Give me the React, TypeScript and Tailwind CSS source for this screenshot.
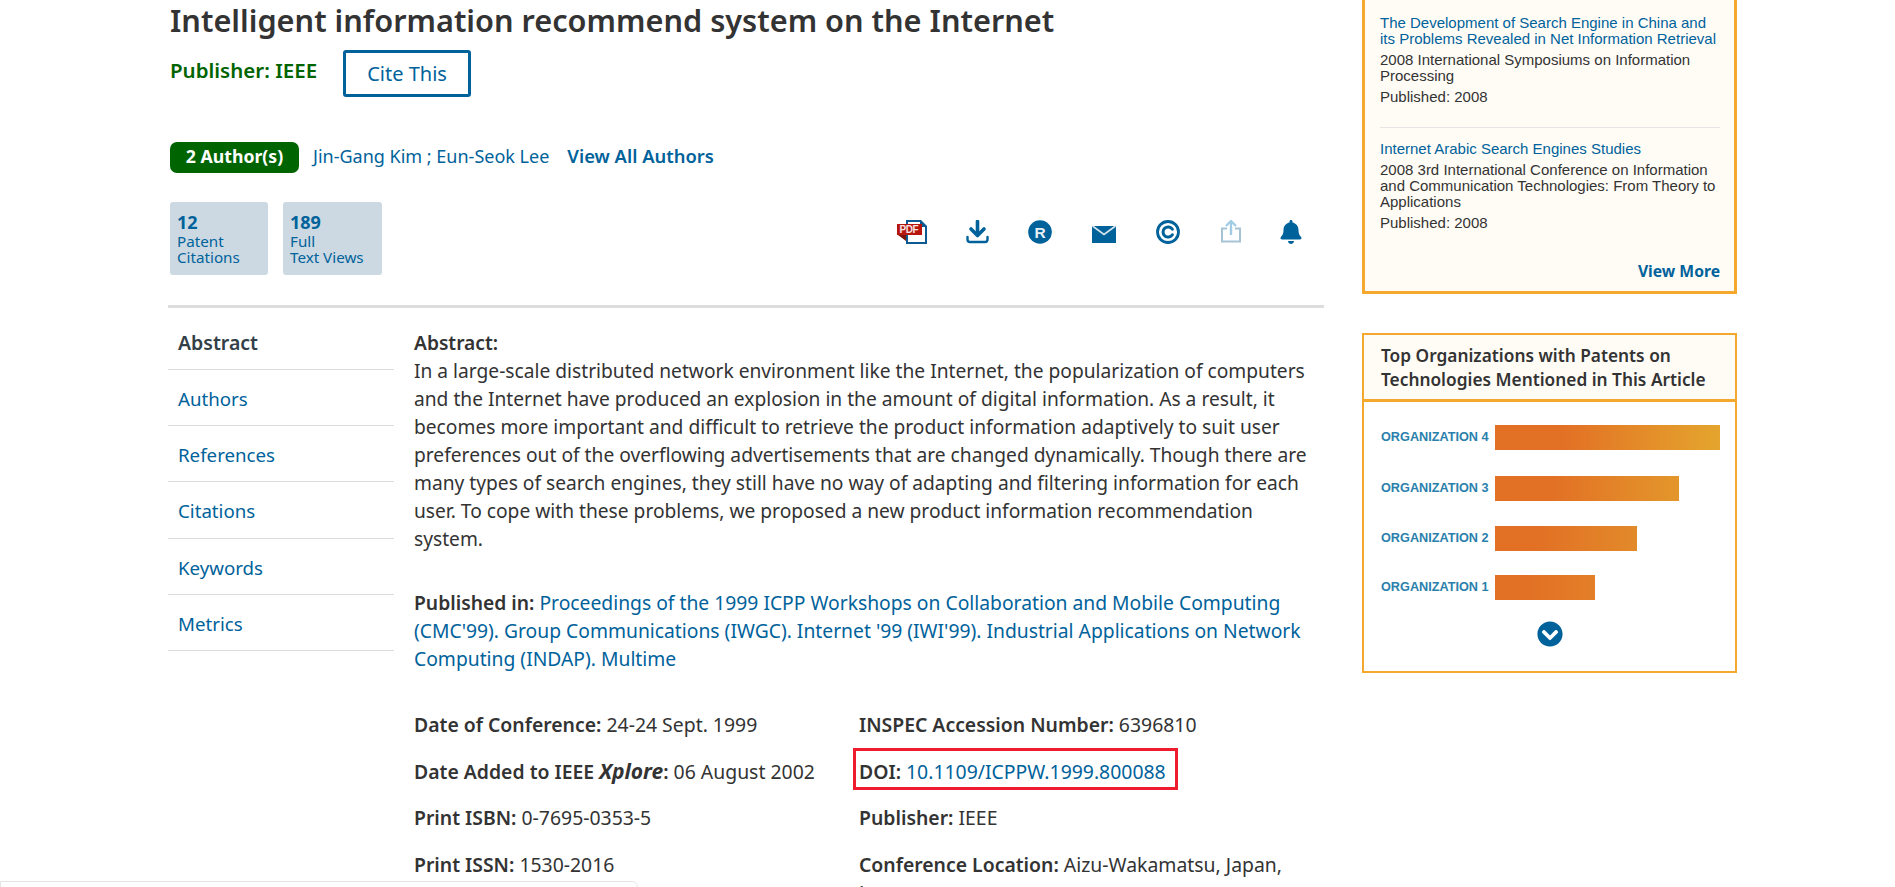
import { FaBell, FaChevronCircleDown } from "react-icons/fa";

const sans = "font-['Noto_Sans',sans-serif]";

const navItems = ["Authors", "References", "Citations", "Keywords", "Metrics"];

const abstractLines = [
  "In a large-scale distributed network environment like the Internet, the popularization of computers",
  "and the Internet have produced an explosion in the amount of digital information. As a result, it",
  "becomes more important and difficult to retrieve the product information adaptively to suit user",
  "preferences out of the overflowing advertisements that are changed dynamically. Though there are",
  "many types of search engines, they still have no way of adapting and filtering information for each",
  "user. To cope with these problems, we proposed a new product information recommendation",
  "system.",
];

const orgBars = [
  { label: "ORGANIZATION 4", width: "w-[225px]", tone: "to-[#e4a52d]", gap: "mb-[26px]" },
  { label: "ORGANIZATION 3", width: "w-[184px]", tone: "to-[#e3962b]", gap: "mb-[25px]" },
  { label: "ORGANIZATION 2", width: "w-[142px]", tone: "to-[#e28a2a]", gap: "mb-[24px]" },
  { label: "ORGANIZATION 1", width: "w-[100px]", tone: "to-[#e37f28]", gap: "mb-[21px]" },
];

const PdfIcon = () => (
  <svg width="31" height="24" viewBox="0 0 31 24">
    <path d="M9 0h15l6 6v18H9z" fill="#0d5a92" />
    <path d="M11 2h12v5h5v15H11z" fill="#fff" />
    <path d="M0 4h25v11H0z" fill="#b8150f" />
    <path d="M1 15h8v6z" fill="#7d110c" />
    <text x="2.5" y="13.2" fontSize="10" fontWeight="700" fill="#f4e4e2" fontFamily="Liberation Sans, sans-serif" textLength="19">
      PDF
    </text>
  </svg>
);

const DownloadIcon = () => (
  <svg width="23" height="24" viewBox="0 0 23 24" fill="none">
    <path d="M11.5 1.5v13" stroke="#00629b" strokeWidth="3.6" strokeLinecap="round" />
    <path d="M5 9l6.5 6.5L18 9" stroke="#00629b" strokeWidth="3.6" strokeLinecap="round" strokeLinejoin="round" />
    <path d="M1.5 17v2.5c0 1.6 1 2.5 2.5 2.5h15c1.5 0 2.5-.9 2.5-2.5V17" stroke="#00629b" strokeWidth="2.4" strokeLinecap="round" />
  </svg>
);

const RegisteredIcon = () => (
  <svg width="24" height="24" viewBox="0 0 24 24">
    <circle cx="12" cy="12" r="11.8" fill="#00629b" />
    <text x="12" y="17.5" textAnchor="middle" fontSize="15.5" fontWeight="700" fill="#e8f1f6" fontFamily="Liberation Sans, sans-serif">
      R
    </text>
  </svg>
);

const MailIcon = () => (
  <svg width="24" height="24" viewBox="0 0 24 24">
    <path d="M0 6h24V23H0z" fill="#00629b" />
    <path d="M0.5 6L12 14.5 23.5 6" fill="none" stroke="#d6e6ef" strokeWidth="1.6" />
  </svg>
);

const CopyrightIcon = () => (
  <svg width="24" height="24" viewBox="0 0 24 24" fill="none">
    <circle cx="12" cy="12" r="10.5" stroke="#00629b" strokeWidth="2.8" />
    <path d="M16.4 9.2a5.1 5.1 0 1 0 0 5.6" stroke="#00629b" strokeWidth="3" strokeLinecap="round" />
  </svg>
);

const ShareIcon = () => (
  <svg width="20" height="24" viewBox="0 0 20 24" fill="none">
    <path d="M6 8.5H1V21.5H19V8.5H14" stroke="#a6c3d6" strokeWidth="2" />
    <path d="M10 15V2" stroke="#9fcbe6" strokeWidth="2.4" />
    <path d="M5 6l5-5 5 5" stroke="#9fcbe6" strokeWidth="2.2" />
  </svg>
);

const MetricCard = ({ value, top, bottom, width }: { value: string; top: string; bottom: string; width: string }) => (
  <div className={`${width} h-[73px] rounded-[3px] bg-[#ccd9e2] pl-[7px] pt-[10px] text-[#00629b]`}>
    <div className="text-[18px] font-bold leading-[21px]">{value}</div>
    <div className="text-[15.2px] leading-[16px]">{top}</div>
    <div className="text-[15.2px] leading-[16px]">{bottom}</div>
  </div>
);

const MetaRow = ({ label, children }: { label: React.ReactNode; children: React.ReactNode }) => (
  <div className="h-[46.7px] text-[19.4px] leading-[24px] text-[#333]">
    <span className="font-semibold">{label}</span> {children}
  </div>
);

export default function App() {
  return (
    <div className={`${sans} relative flex h-[887px] w-[1895px] overflow-hidden bg-white pl-[168px] text-[#333]`}>
      <main className="w-[1156px] shrink-0">
        <div className="pl-[2px]">
          <h1 className="pt-[1px] text-[30.7px] font-semibold leading-[38px] text-[#333]">
            Intelligent information recommend system on the Internet
          </h1>
          <div className="mt-[11px] flex items-start">
            <span className="mt-[7px] text-[20.5px] font-semibold leading-[26px] text-[#006400]">Publisher: IEEE</span>
            <button className="ml-[26px] h-[47px] w-[128px] rounded-[3px] border-[3px] border-[#00629b] text-[20px] text-[#00629b]">
              Cite This
            </button>
          </div>
          <div className="mt-[45px] flex h-[31px] items-center">
            <span className="flex h-[31px] w-[129px] items-center justify-center rounded-[7px] bg-[#006400] pb-[2px] text-[17.7px] font-bold text-white">
              2 Author(s)
            </span>
            <span className="mb-[2px] ml-[14px] text-[18px] text-[#00629b]">Jin-Gang Kim ; Eun-Seok Lee</span>
            <span className="mb-[3px] ml-[18px] text-[18.4px] font-semibold text-[#00629b]">View All Authors</span>
          </div>
          <div className="mt-[29px] flex items-start">
            <MetricCard value="12" top="Patent" bottom="Citations" width="w-[98px]" />
            <MetricCard value="189" top="Full" bottom="Text Views" width="ml-[15px] w-[99px]" />
            <div className="ml-[515px] mt-[18px] flex items-center">
              <PdfIcon />
              <div className="ml-[38px]"><DownloadIcon /></div>
              <div className="ml-[39px]"><RegisteredIcon /></div>
              <div className="ml-[40px]"><MailIcon /></div>
              <div className="ml-[40px]"><CopyrightIcon /></div>
              <div className="ml-[41px]"><ShareIcon /></div>
              <FaBell className="ml-[38px] text-[#00629b]" size={24} />
            </div>
          </div>
        </div>
        <div className="mt-[30px] h-[3px] bg-[#ddd]" />
        <div className="flex">
          <nav className="mt-[5px] w-[226px] shrink-0">
            <div className="flex h-[57px] items-center border-b border-[#ddd] pl-[10px] pt-[3px] text-[19.5px] font-semibold text-[#333f48]">
              Abstract
            </div>
            {navItems.map((item) => (
              <div key={item} className="flex h-[56.2px] items-center border-b border-[#ddd] pl-[10px] pt-[3px] text-[18.7px] text-[#00629b]">
                {item}
              </div>
            ))}
          </nav>
          <article className="ml-[20px] w-[900px] pt-[21px] text-[19.2px] leading-[28px]">
            <div className="font-semibold">Abstract:</div>
            {abstractLines.map((line) => (
              <div key={line} className="whitespace-nowrap">{line}</div>
            ))}
            <div className="mt-[36px] text-[19.3px] text-[#00629b]">
              <div className="whitespace-nowrap">
                <span className="font-semibold text-[#333]">Published in:</span> Proceedings of the 1999 ICPP Workshops on Collaboration and Mobile Computing
              </div>
              <div className="whitespace-nowrap">(CMC'99). Group Communications (IWGC). Internet '99 (IWI'99). Industrial Applications on Network</div>
              <div className="whitespace-nowrap">Computing (INDAP). Multime</div>
            </div>
            <div className="mt-[40px] flex">
              <div className="w-[445px]">
                <MetaRow label="Date of Conference:">24-24 Sept. 1999</MetaRow>
                <MetaRow label={<>Date Added to IEEE <i className="text-[21px] leading-[20px] font-bold">Xplore</i>:</>}>06 August 2002</MetaRow>
                <MetaRow label="Print ISBN:">0-7695-0353-5</MetaRow>
                <MetaRow label="Print ISSN:">1530-2016</MetaRow>
              </div>
              <div>
                <MetaRow label="INSPEC Accession Number:">6396810</MetaRow>
                <MetaRow label="DOI:"><span className="text-[#00629b]">10.1109/ICPPW.1999.800088</span></MetaRow>
                <MetaRow label="Publisher:">IEEE</MetaRow>
                <MetaRow label="Conference Location:">Aizu-Wakamatsu, Japan,<div className="pt-[4px]">Japan</div></MetaRow>
              </div>
            </div>
          </article>
        </div>
      </main>

      <aside className="ml-[38px] w-[375px] shrink-0">
        <section className="h-[294px] border-x-[3px] border-b-[3px] border-[#f5a82e] bg-[#fffcf6] pl-[15px] pr-[14px] pt-[15px] font-['Liberation_Sans',sans-serif] text-[15px] leading-[16px] text-[#333]">
          <div className="text-[#00629b]">The Development of Search Engine in China and its Problems Revealed in Net Information Retrieval</div>
          <div className="mt-[5px]">2008 International Symposiums on Information Processing</div>
          <div className="mt-[5px]">Published: 2008</div>
          <div className="mt-[22px] border-t border-[#e6e6e6] pt-[13px]">
            <div className="text-[#00629b]">Internet Arabic Search Engines Studies</div>
            <div className="mt-[5px]">2008 3rd International Conference on Information and Communication Technologies: From Theory to Applications</div>
            <div className="mt-[5px]">Published: 2008</div>
          </div>
          <div className={`${sans} mt-[32px] text-right text-[15.7px] font-bold text-[#00629b]`}>View More</div>
        </section>

        <section className="mt-[39px] h-[340px] border-2 border-[#f5a82e]">
          <div className="h-[67px] border-b-[3px] border-[#f5a82e] bg-[#fffcf6] pl-[17px] pt-[9px] text-[17.3px] font-semibold leading-[24px] text-[#333]">
            Top Organizations with Patents on<br />Technologies Mentioned in This Article
          </div>
          <div className="pl-[16px] pt-[23px]">
            {orgBars.map((bar) => (
              <div key={bar.label} className={`flex h-[25px] items-center ${bar.gap}`}>
                <span className="w-[115px] pl-[1px] pt-[1px] font-['Liberation_Sans',sans-serif] text-[12.7px] font-bold text-[#2a7fac]">{bar.label}</span>
                <div className={`h-[25px] ${bar.width} bg-gradient-to-r from-[#e27025] from-30% ${bar.tone}`} />
              </div>
            ))}
            <div className="flex justify-center pr-[16px]">
              <FaChevronCircleDown className="text-[#00629b]" size={26} />
            </div>
          </div>
        </section>
      </aside>

      <div className="absolute left-[853px] top-[748px] h-[42px] w-[325px] border-[3px] border-[#ee1c2e]" />
      <div className="absolute left-0 top-[881px] h-[20px] w-[638px] rounded-tr-[6px] border border-[#e5e5e5] bg-white" />
    </div>
  );
}
